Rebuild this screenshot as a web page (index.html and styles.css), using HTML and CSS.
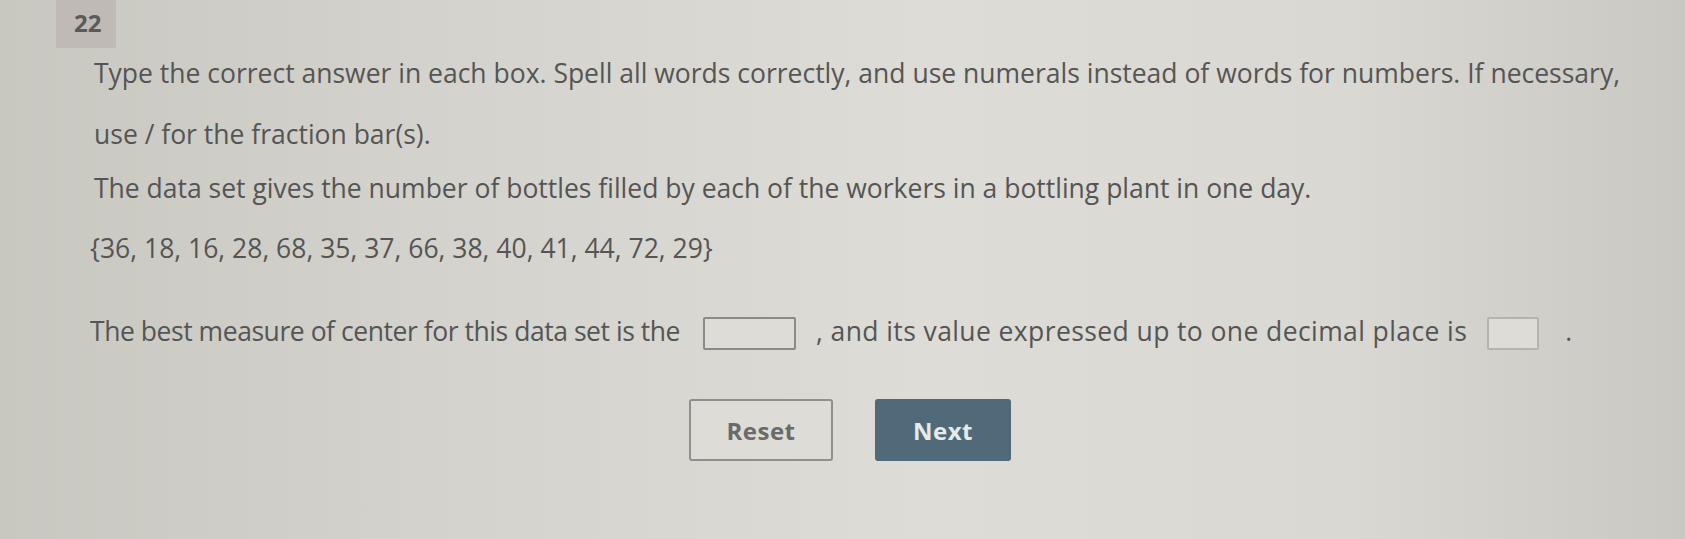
FILE: index.html
```html
<!DOCTYPE html>
<html>
<head>
<meta charset="utf-8">
<link rel="stylesheet" href="styles.css">
</head>
<body>
<div class="page">
  <div class="qnum">22</div>
  <div class="content">
    <p class="line l1">Type the correct answer in each box. Spell all words correctly, and use numerals instead of words for numbers. If necessary,</p>
    <p class="line l2">use / for the fraction bar(s).</p>
    <p class="line l3">The data set gives the number of bottles filled by each of the workers in a bottling plant in one day.</p>
    <p class="line l4">{36, 18, 16, 28, 68, 35, 37, 66, 38, 40, 41, 44, 72, 29}</p>
    <p class="line l5"><span class="seg-a">The best measure of center for this data set is the</span><span class="box b1"></span><span class="seg-b">, and its value expressed up to one decimal place is</span><span class="box b2"></span>.</p>
    <div class="buttons">
      <button class="btn reset">Reset</button>
      <button class="btn next">Next</button>
    </div>
  </div>
</div>
</body>
</html>
```
FILE: styles.css
```css
html, body {
  margin: 0;
  padding: 0;
  width: 1685px;
  height: 539px;
  overflow: hidden;
}
body {
  background: linear-gradient(90deg, #c8c8c1 0%, #d3d2cc 25%, #dddcd6 55%, #d9d8d2 80%, #c9c8c2 100%);
  font-family: "Open Sans", "Liberation Sans", sans-serif;
  color: #555555;
}
.page {
  position: relative;
  height: 539px;
}
.qnum {
  position: absolute;
  left: 56px;
  top: 0;
  width: 60px;
  height: 48px;
  background: #bfbab5;
  font-weight: 700;
  font-size: 24px;
  line-height: 46px;
  color: #5c5a58;
  padding-left: 18px;
  box-sizing: border-box;
}
.content {
  padding: 56px 0 0 94px;
}
.line {
  margin: 0;
  font-size: 26.5px;
  line-height: 34px;
  white-space: nowrap;
}
.l2 { margin-top: 27px; }
.l3 { margin-top: 20px; }
.l4 { margin-top: 26px; margin-left: -4px; }
.l5 { margin-top: 49px; margin-left: -4px; }
.seg-a { letter-spacing: -0.45px; }
.seg-b { letter-spacing: 0.4px; }
.box {
  display: inline-block;
  vertical-align: middle;
  border: 2px solid #8a8a86;
  border-radius: 2px;
  background: #dedcd7;
  height: 33px;
  box-sizing: border-box;
}
.b1 { width: 93px; margin: 0 20px 0 23px; }
.b2 { width: 52px; border-color: #b5b3ae; margin: 0 26px 0 20px; }
.buttons {
  display: flex;
  gap: 42px;
  margin-top: 49px;
  margin-left: 595px;
}
.btn {
  height: 62px;
  border-radius: 3px;
  font-family: "Open Sans", "Liberation Sans", sans-serif;
  font-weight: 700;
  font-size: 24px;
  letter-spacing: 0.5px;
}
.reset {
  width: 144px;
  background: #dddcd6;
  border: 2px solid #8f8f8b;
  color: #6a6a6a;
}
.next {
  width: 136px;
  background: #506a7a;
  border: none;
  color: #e6ebe7;
}
```
